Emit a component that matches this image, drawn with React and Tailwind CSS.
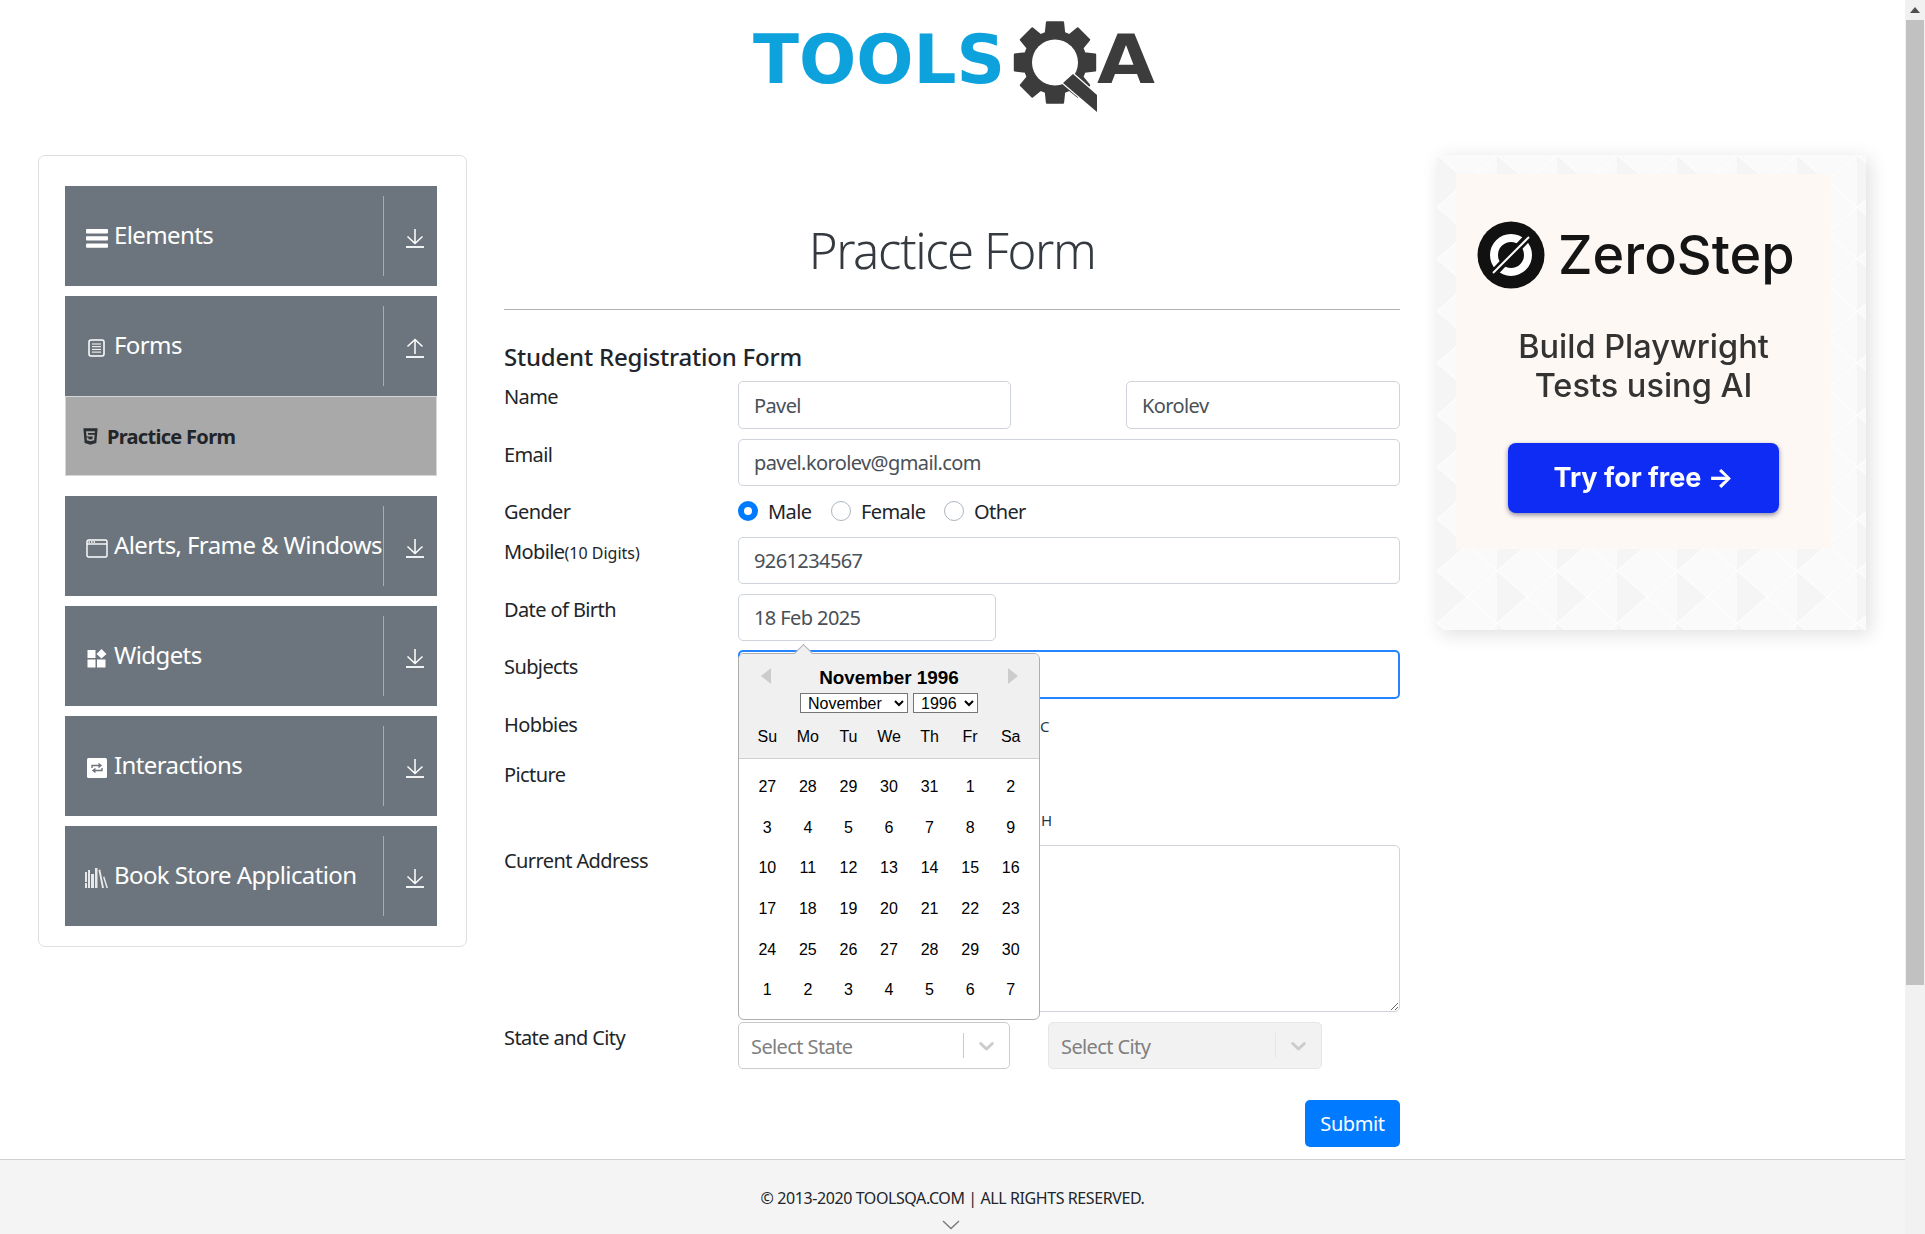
import { FaHtml5 } from 'react-icons/fa';

const WEEKDAYS = ['Su', 'Mo', 'Tu', 'We', 'Th', 'Fr', 'Sa'];
const DAYS = [
  27, 28, 29, 30, 31, 1, 2,
  3, 4, 5, 6, 7, 8, 9,
  10, 11, 12, 13, 14, 15, 16,
  17, 18, 19, 20, 21, 22, 23,
  24, 25, 26, 27, 28, 29, 30,
  1, 2, 3, 4, 5, 6, 7,
];

function gearPath(cx, cy) {
  // 8 teeth, first one pointing straight up
  const pts = [];
  for (let i = 0; i < 8; i++) {
    const a = (i * Math.PI) / 4 - Math.PI / 2;
    const spread = [[-0.3, 31], [-0.2, 41], [0.2, 41], [0.3, 31]];
    spread.forEach(([d, r]) => {
      pts.push(`${(cx + Math.cos(a + d) * r).toFixed(1)} ${(cy + Math.sin(a + d) * r).toFixed(1)}`);
    });
  }
  return `M${pts.join('L')}Z`;
}

function Logo() {
  return (
    <svg width="408" height="116" viewBox="752 0 408 116">
      <text x="753" y="83" textLength="252" lengthAdjust="spacingAndGlyphs" fontFamily="'DejaVu Sans', sans-serif" fontWeight="700" fontSize="68" fill="#0ea2dd">TOOLS</text>
      <path d={gearPath(1055, 62.5)} fill="#3c3c3c" stroke="#3c3c3c" strokeWidth="2" strokeLinejoin="round" />
      <circle cx="1055" cy="62.5" r="23" fill="#fff" />
      <path d="M1073 74L1097 95V112L1063 83Z" fill="#3c3c3c" stroke="#fff" strokeWidth="2.5" paintOrder="stroke" />
      <text x="1097" y="83" textLength="58" lengthAdjust="spacingAndGlyphs" fontFamily="'DejaVu Sans', sans-serif" fontWeight="700" fontSize="68" fill="#3c3c3c">A</text>
    </svg>
  );
}

function IconBars() {
  return (
    <svg width="22" height="19" viewBox="0 0 22 19" fill="#fff">
      <rect y="0" width="22" height="4.4" rx="1" />
      <rect y="7.2" width="22" height="4.4" rx="1" />
      <rect y="14.4" width="22" height="4.4" rx="1" />
    </svg>
  );
}

function IconDoc() {
  return (
    <svg width="17" height="18" viewBox="0 0 17 18" fill="none" stroke="#fff">
      <rect x="1" y="1" width="15" height="16" rx="2" strokeWidth="1.5" />
      <path d="M4 5h9M4 7.7h9M4 10.4h9M4 13.1h9" strokeWidth="1" />
    </svg>
  );
}

function IconWindow() {
  return (
    <svg width="22" height="19" viewBox="0 0 22 19" fill="none" stroke="#fff">
      <rect x="1" y="1" width="20" height="17" rx="1.5" strokeWidth="1.4" />
      <path d="M1 5h20" strokeWidth="1.4" />
      <path d="M2.5 3h1.5M5 3h1.5M7.5 3h1.5" strokeWidth="1.4" />
    </svg>
  );
}

function IconWidgets() {
  return (
    <svg width="20" height="19" viewBox="0 0 20 19" fill="#fff">
      <rect x="0.5" y="1" width="8" height="8" />
      <rect x="0.5" y="10.5" width="8" height="8" />
      <rect x="10" y="10.5" width="8.5" height="8" />
      <path d="M14.5 0L19.5 5L14.5 9.5L9.5 5Z" />
    </svg>
  );
}

function IconInteract() {
  return (
    <svg width="20" height="20" viewBox="0 0 20 20">
      <rect width="20" height="20" rx="1.5" fill="#fff" />
      <path d="M5 10V7.5h8.5M11.5 5.5l2.5 2-2.5 2M15 10v2.5H6.5M8.5 10.5l-2.5 2 2.5 2" fill="none" stroke="#6c757d" strokeWidth="1.4" />
    </svg>
  );
}

function IconBooks() {
  return (
    <svg width="23" height="20" viewBox="0 0 23 20" fill="#e8e8e8">
      <path d="M0 4h2v10H0zM0 15h2v5H0zM3 2h2v18H3zM6 6h3v14H6zM10 0h2.5v20H10z" />
      <path d="M13.5 2l1.8-.4L19 20h-2zM18 9l1.4-.5L23 20h-1.6z" />
    </svg>
  );
}

function ArrowIcon({ up }) {
  return (
    <svg width="18" height="20" viewBox="0 0 18 20" fill="none" stroke="#fff" strokeWidth="1.5">
      {up
        ? <path d="M9 16V1.5M1.5 8.5L9 1.5L16.5 8.5" />
        : <path d="M9 1V15.5M1.5 8.5L9 15.5L16.5 8.5" />}
      <path d="M0 19h18" strokeWidth="1.8" />
    </svg>
  );
}

function NavItem({ icon, label, up }) {
  return (
    <div className="flex h-[100px] items-center bg-[#6c757d] text-white">
      <div className="flex w-[49px] shrink-0 translate-y-[2px] justify-center pl-[14px]">{icon}</div>
      <div className="min-w-0 flex-1 whitespace-nowrap pb-[2px] text-[24px] tracking-[-0.6px]">{label}</div>
      <div className="h-[80px] w-px shrink-0 bg-white/40" />
      <div className="flex w-[53px] shrink-0 translate-y-[2px] justify-center pl-[9px]">
        <ArrowIcon up={up} />
      </div>
    </div>
  );
}

function Sidebar() {
  return (
    <aside className="ml-[38px] flex h-[792px] w-[429px] shrink-0 flex-col rounded-[7px] border border-[#dfdfdf] pl-[26px] pr-[29px] pt-[30px]">
      <NavItem icon={<IconBars />} label="Elements" />
      <div className="mt-[10px]">
        <NavItem icon={<IconDoc />} label="Forms" up />
        <div className="flex h-[80px] items-center gap-[7px] border border-[#d3d6da] bg-[#a9a9a9] pl-[15px] pt-[2px] text-[#212529]">
          <FaHtml5 className="size-[19px] -translate-y-[1px] text-[#2b2f33]" />
          <span className="text-[20px] font-bold tracking-[-0.7px]">Practice Form</span>
        </div>
      </div>
      <div className="mt-[20px] flex flex-col gap-[10px]">
        <NavItem icon={<IconWindow />} label="Alerts, Frame & Windows" />
        <NavItem icon={<IconWidgets />} label="Widgets" />
        <NavItem icon={<IconInteract />} label="Interactions" />
        <NavItem icon={<IconBooks />} label="Book Store Application" />
      </div>
    </aside>
  );
}

function TextBox({ value, className = '' }) {
  return (
    <input
      readOnly
      value={value}
      className={`rounded-[5px] border border-[#ced4da] bg-white px-[15px] text-[20px] tracking-[-0.6px] text-[#495057] outline-none ${className}`}
    />
  );
}

function Radio({ label, checked, width }) {
  return (
    <div className={`flex items-center gap-[10px] ${width}`}>
      {checked
        ? <span className="flex size-[20px] items-center justify-center rounded-full bg-[#007bff]"><span className="size-[8px] rounded-full bg-white" /></span>
        : <span className="size-[20px] rounded-full border border-[#adb5bd] bg-white" />}
      <span className="pt-[1px] tracking-[-0.6px] text-[#212529]">{label}</span>
    </div>
  );
}

function Row({ label, height, labelTop = 'pt-px', className = '', children }) {
  return (
    <div className={`flex ${height} ${className}`}>
      <div className={`w-[234px] shrink-0 tracking-[-0.6px] text-[#212529] ${labelTop}`}>{label}</div>
      <div className="relative min-w-0 flex-1">{children}</div>
    </div>
  );
}

function DropdownChevron({ className }) {
  return (
    <svg width="25" height="25" viewBox="0 0 20 20" className={className} fill="currentColor">
      <path d="M4.516 7.548c0.436-0.446 1.043-0.481 1.576 0l3.908 3.747 3.908-3.747c0.533-0.481 1.141-0.446 1.576 0 0.436 0.445 0.408 1.197 0 1.615-0.406 0.418-4.695 4.502-4.695 4.502-0.217 0.223-0.502 0.335-0.787 0.335s-0.57-0.112-0.789-0.335c0 0-4.287-4.084-4.695-4.502s-0.436-1.17 0-1.615z" />
    </svg>
  );
}

function SelectBox({ placeholder, disabled, width }) {
  return (
    <div className={`flex h-[47px] items-center rounded-[5px] border ${width} ${disabled ? 'border-[#e6e6e6] bg-[#f2f2f2]' : 'border-[#cccccc] bg-white'}`}>
      <div className="flex-1 pl-[12px] pt-[2px] tracking-[-0.6px] text-[#808080]">{placeholder}</div>
      <div className={`h-[25px] w-px ${disabled ? 'bg-[#e6e6e6]' : 'bg-[#cccccc]'}`} />
      <DropdownChevron className="mx-[10px] text-[#cccccc]" />
    </div>
  );
}

function DatePicker() {
  return (
    <div className="absolute left-0 top-[3px] z-10 h-[367px] w-[302px] rounded-[6px] border border-[#aeaeae] bg-white font-['Liberation_Sans',sans-serif] text-[16px] text-black">
      {/* little pointer up to the date field */}
      <div className="absolute left-[57px] top-[-10px] size-[15px] translate-y-[3px] rotate-45 border-l border-t border-[#aeaeae] bg-[#f0f0f0]" />
      <div className="relative h-[105px] rounded-t-[5px] border-b border-[#d0d0d0] bg-[#f0f0f0]">
        <div className="relative flex h-[36px] items-end justify-center">
          <span className="absolute left-[22px] top-[14px] h-0 w-0 border-y-[8px] border-r-[10px] border-y-transparent border-r-[#ccc]" />
          <span className="text-[18.9px] font-bold leading-[24px]">November 1996</span>
          <span className="absolute right-[21px] top-[14px] h-0 w-0 border-y-[8px] border-l-[10px] border-y-transparent border-l-[#ccc]" />
        </div>
        <div className="mt-[3px] flex justify-center gap-[5px]">
          <select defaultValue="November" className="h-[20px] w-[108px] border border-[#767676] bg-white pl-[3px] text-[16px] leading-none">
            <option>November</option>
          </select>
          <select defaultValue="1996" className="h-[20px] w-[65px] border border-[#767676] bg-white pl-[3px] text-[16px] leading-none">
            <option>1996</option>
          </select>
        </div>
        <div className="mt-[12px] grid grid-cols-7 px-[8px] text-center">
          {WEEKDAYS.map(d => <span key={d}>{d}</span>)}
        </div>
      </div>
      <div className="mt-[8px] grid grid-cols-7 px-[8px] text-center">
        {DAYS.map((d, i) => (
          <span key={i} className="flex h-[40.6px] items-center justify-center">{d}</span>
        ))}
      </div>
    </div>
  );
}

function PracticeForm() {
  return (
    <main className="ml-[37px] w-[896px] shrink-0 text-[20px]">
      <h1 className="pt-[58px] text-center text-[49px] font-light leading-[75px] tracking-[-1.4px] text-[#343a40]">Practice Form</h1>
      <hr className="mt-[21px] border-[#b0b0b0]" />
      <h5 className="mt-[29px] text-[24px] font-medium leading-[36px] tracking-[-0.2px] text-[#212529]">Student Registration Form</h5>
      <div className="mt-[6px]">
        <Row label="Name" height="h-[48px]">
          <div className="flex justify-between">
            <TextBox value="Pavel" className="h-[48px] w-[273px]" />
            <TextBox value="Korolev" className="h-[48px] w-[274px]" />
          </div>
        </Row>
        <Row label="Email" height="h-[47px]" className="mt-[10px]">
          <TextBox value="pavel.korolev@gmail.com" className="h-[47px] w-full" />
        </Row>
        <Row label="Gender" height="h-[30px]" labelTop="pt-[1px]" className="mt-[10px]">
          <div className="flex h-[30px] items-center">
            <Radio label="Male" checked width="w-[93px]" />
            <Radio label="Female" width="w-[113px]" />
            <Radio label="Other" />
          </div>
        </Row>
        <Row label={<>Mobile<span className="text-[16px] tracking-normal">(10 Digits)</span></>} height="h-[47px]" labelTop="pt-0" className="mt-[11px]">
          <TextBox value="9261234567" className="h-[47px] w-full" />
        </Row>
        <Row label="Date of Birth" height="h-[47px]" className="mt-[10px]">
          <TextBox value="18 Feb 2025" className="h-[47px] w-[258px]" />
        </Row>
        <Row label="Subjects" height="h-[49px]" labelTop="pt-[2px]" className="mt-[9px]">
          <div className="h-[49px] rounded-[5px] border-2 border-[#2684ff] bg-white" />
          <DatePicker />
        </Row>
        <Row label="Hobbies" height="h-[40px]" className="mt-[10px]">
          <div className="pl-[302px] pt-[7px] text-[15px] leading-[20px] text-[#1f3a4d]">C</div>
        </Row>
        <Row label="Picture" height="h-[76px]" labelTop="pt-[1px]" className="mt-[10px]">
          <div className="pl-[303px] pt-[51px] text-[15px] leading-[20px] text-[#1f3a4d]">H</div>
        </Row>
        <Row label="Current Address" height="h-[167px]" labelTop="pt-[1px]" className="mt-[10px]">
          <textarea readOnly className="block h-[167px] w-full rounded-[5px] border border-[#ced4da] bg-white outline-none" />
        </Row>
        <Row label="State and City" height="h-[47px]" labelTop="pt-[1px]" className="mt-[10px]">
          <div className="flex gap-[38px]">
            <SelectBox placeholder="Select State" width="w-[272px]" />
            <SelectBox placeholder="Select City" disabled width="w-[274px]" />
          </div>
        </Row>
        <div className="mt-[31px] flex justify-end">
          <button className="h-[47px] w-[95px] rounded-[5px] bg-[#007bff] tracking-[-0.4px] text-white">Submit</button>
        </div>
      </div>
    </main>
  );
}

function AdCard() {
  return (
    <div className="relative ml-[37px] h-[475px] w-[429px] shrink-0 bg-[#fafafa] shadow-[4px_4px_18px_rgba(0,0,0,0.13)]">
      <svg className="absolute inset-0" width="429" height="475">
        <defs>
          <pattern id="tri" width="60" height="52" patternUnits="userSpaceOnUse">
            <path d="M0 0L30 26L0 52Z" fill="#f5f5f5" />
            <path d="M0 0L30 26L60 0M0 52L30 26L60 52" fill="none" stroke="#fff" strokeWidth="1" />
          </pattern>
        </defs>
        <rect width="429" height="475" fill="url(#tri)" />
      </svg>
      <div className="relative ml-[19px] mt-[19px] inline-flex h-[375px] w-[375px] flex-col items-center bg-[#fdf8f3] font-['Inter',sans-serif] blur-[0.3px]">
        <div className="mt-[47px] flex w-full items-center gap-[13px] pl-[21px]">
          <svg width="68" height="68" viewBox="0 0 68 68">
            <circle cx="34" cy="34" r="33.5" fill="#111" />
            <circle cx="34" cy="34" r="17" fill="none" stroke="#fff" strokeWidth="8" />
            <path d="M15 54L53 14" stroke="#111" strokeWidth="8" />
            <path d="M16 52L52 16" stroke="#fff" strokeWidth="2" />
          </svg>
          <span className="text-[54px] font-medium leading-[64px] text-[#151515]">ZeroStep</span>
        </div>
        <div className="mt-[38px] text-center text-[32.5px] font-medium leading-[39px] text-[#333]">
          <div>Build Playwright</div>
          <div>Tests using AI</div>
        </div>
        <div className="mt-[38px] flex h-[70px] w-[271px] items-center justify-center rounded-[8px] bg-[#0f2cf5] text-[27px] font-bold text-white shadow-[0_2px_5px_rgba(0,0,60,0.45)]">
          Try for free →
        </div>
      </div>
    </div>
  );
}

export default function App() {
  return (
    <div className="flex h-[1234px] w-[1925px] overflow-hidden bg-white font-['Noto_Sans',sans-serif]">
      <div className="flex w-[1905px] shrink-0 flex-col">
        <header className="flex h-[155px] shrink-0 justify-center pl-[7px]">
          <Logo />
        </header>
        <div className="flex h-[1004px] shrink-0">
          <Sidebar />
          <PracticeForm />
          <AdCard />
        </div>
        <footer className="relative flex h-[75px] shrink-0 justify-center border-t border-[#d0d0d0] bg-[#f4f4f4] pt-[26px] text-[16px] leading-[24px] tracking-[-0.41px] text-[#212529]">
          © 2013-2020 TOOLSQA.COM | ALL RIGHTS RESERVED.
          <svg className="absolute bottom-[4px] left-[942px]" width="18" height="10" viewBox="0 0 18 10" fill="none" stroke="#777" strokeWidth="1.3">
            <path d="M1 1L9 8.5L17 1" />
          </svg>
        </footer>
      </div>
      {/* browser scrollbar */}
      <div className="flex w-[20px] shrink-0 flex-col bg-[#f1f1f1]">
        <div className="flex h-[20px] shrink-0 items-center justify-center">
          <span className="h-0 w-0 border-x-[5px] border-b-[6px] border-x-transparent border-b-[#505050]" />
        </div>
        <div className="mx-auto h-[965px] w-[18px] bg-[#c1c1c1]" />
      </div>
    </div>
  );
}
